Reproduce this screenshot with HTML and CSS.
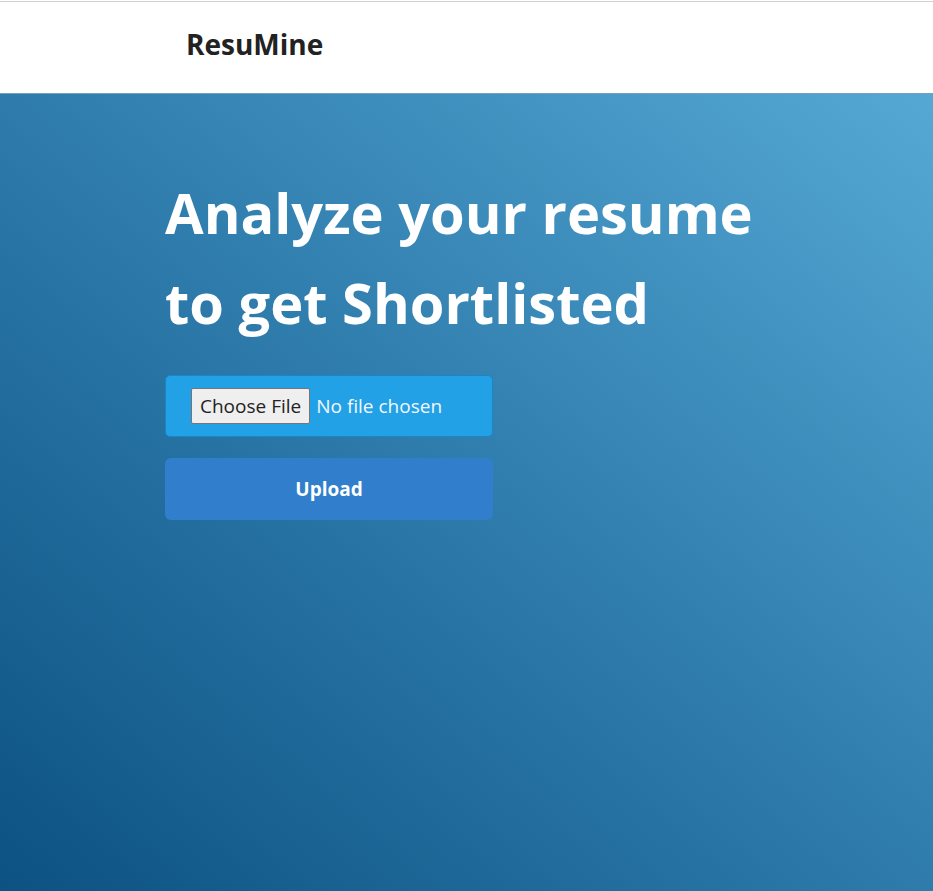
FILE: index.html
```html
<!DOCTYPE html>
<html lang="en">
<head>
<meta charset="utf-8">
<title>ResuMine</title>
<link rel="stylesheet" href="styles.css">
</head>
<body>
<header class="topbar">
  <div class="brand">ResuMine</div>
</header>
<main class="hero">
  <div class="content">
    <h1 class="title">Analyze your resume<br>to get Shortlisted</h1>
    <form class="upload-form">
      <div class="file-box">
        <input type="file" class="file-input">
      </div>
      <button type="button" class="upload-btn">Upload</button>
    </form>
  </div>
</main>
</body>
</html>
```
FILE: styles.css
```css
html, body {
  margin: 0;
  padding: 0;
  height: 100%;
}
body {
  font-family: "Open Sans", "Noto Sans", sans-serif;
  display: flex;
  flex-direction: column;
  min-height: 891px;
}
.topbar {
  background: #fff;
  border-top: 1px solid #d0d0d0;
  margin-top: 1px;
  height: 92px;
  display: flex;
  align-items: center;
  padding-left: 186px;
  box-sizing: border-box;
}
.brand {
  font-size: 28px;
  font-weight: 700;
  color: #222;
  letter-spacing: 0;
  margin-top: -7px;
}
.hero {
  flex: 1;
  background: linear-gradient(to top right, #0c5282 0%, #2a77a8 45%, #55a8d4 100%);
  border-top: 1px solid #7a9fb8;
  padding: 0 0 0 165px;
}
.content {
  width: 640px;
}
.title {
  margin: 73px 0 0 0;
  color: #fff;
  font-size: 56px;
  font-weight: 700;
  line-height: 90px;
  letter-spacing: 0;
}
.upload-form {
  display: flex;
  flex-direction: column;
  gap: 21px;
  margin-top: 28px;
  width: 328px;
}
.file-box {
  height: 62px;
  box-sizing: border-box;
  background: #22a1e7;
  border: 1px solid #1b86c6;
  border-radius: 5px;
  display: flex;
  align-items: center;
  padding-left: 25px;
}
.file-input {
  font-family: "Open Sans", sans-serif;
  font-size: 19px;
  color: #f2f8fc;
}
.file-input::file-selector-button {
  font-family: "Open Sans", sans-serif;
  font-size: 19px;
  color: #222;
  background: #efefef;
  border: 1px solid #767676;
  border-radius: 2px;
  padding: 4px 8px;
  margin-right: 6px;
}
.upload-btn {
  height: 62px;
  background: #317fcc;
  border: none;
  border-radius: 6px;
  color: #fff;
  font-family: "Open Sans", sans-serif;
  font-size: 19px;
  font-weight: 700;
  cursor: pointer;
}
```
